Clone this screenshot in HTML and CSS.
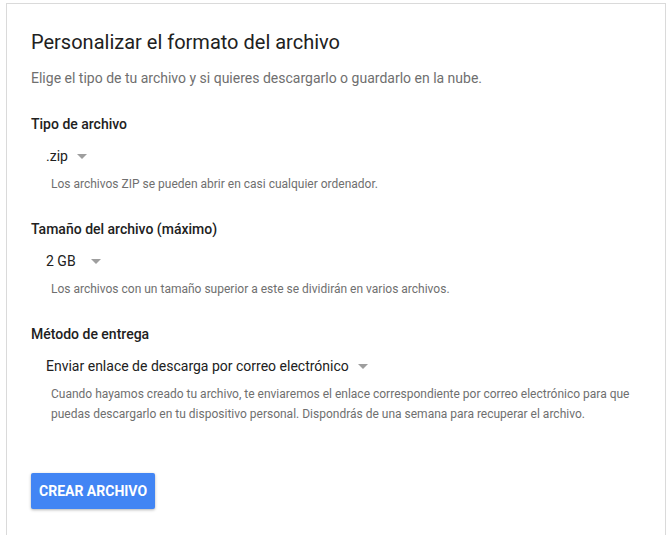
FILE: index.html
```html
<!DOCTYPE html>
<html lang="es">
<head>
<meta charset="utf-8">
<link rel="stylesheet" href="styles.css">
</head>
<body>
<div class="card">
  <h1 class="title">Personalizar el formato del archivo</h1>
  <p class="subtitle">Elige el tipo de tu archivo y si quieres descargarlo o guardarlo en la nube.</p>

  <section class="field">
    <h2 class="label">Tipo de archivo</h2>
    <div class="select"><span class="value">.zip</span><span class="arrow"></span></div>
    <p class="help">Los archivos ZIP se pueden abrir en casi cualquier ordenador.</p>
  </section>

  <section class="field">
    <h2 class="label">Tamaño del archivo (máximo)</h2>
    <div class="select"><span class="value wide">2 GB</span><span class="arrow"></span></div>
    <p class="help">Los archivos con un tamaño superior a este se dividirán en varios archivos.</p>
  </section>

  <section class="field">
    <h2 class="label">Método de entrega</h2>
    <div class="select"><span class="value">Enviar enlace de descarga por correo electrónico</span><span class="arrow"></span></div>
    <p class="help">Cuando hayamos creado tu archivo, te enviaremos el enlace correspondiente por correo electrónico para que puedas descargarlo en tu dispositivo personal. Dispondrás de una semana para recuperar el archivo.</p>
  </section>

  <button class="btn">Crear archivo</button>
</div>
</body>
</html>
```

FILE: styles.css
```css
html, body {
  margin: 0;
  padding: 0;
  background: #ffffff;
}
body {
  font-family: Roboto, "Liberation Sans", Arial, sans-serif;
  color: #212121;
  padding: 3px 0 0 6px;
  width: 671px;
  height: 535px;
  overflow: hidden;
  box-sizing: border-box;
}
.card {
  width: 660px;
  height: 532px;
  box-sizing: border-box;
  border: 1px solid #dadada;
  border-bottom: none;
  padding: 26px 24px 0 24px;
}
.title {
  margin: 0;
  font-size: 20px;
  font-weight: 400;
  line-height: 24px;
  color: #212121;
}
.subtitle {
  margin: 14px 0 0 0;
  font-size: 14px;
  line-height: 20px;
  color: #6f6f6f;
}
.field {
  margin-top: 26px;
}
.field + .field {
  margin-top: 25px;
}
.label {
  margin: 0;
  font-size: 14px;
  font-weight: 500;
  line-height: 20px;
  color: #212121;
}
.select {
  display: flex;
  align-items: center;
  margin: 12px 0 0 15px;
  height: 20px;
  font-size: 14px;
  color: #212121;
}
.value.wide {
  min-width: 36px;
}
.arrow {
  width: 0;
  height: 0;
  margin-left: 9px;
  border-left: 5.5px solid transparent;
  border-right: 5.5px solid transparent;
  border-top: 5px solid #9e9e9e;
}
.help {
  margin: 8px 0 0 20px;
  font-size: 12px;
  line-height: 20px;
  color: #6f6f6f;
  max-width: 590px;
}
.btn {
  display: block;
  margin-top: 49px;
  height: 36px;
  padding: 0 8px;
  min-width: 123px;
  border: none;
  border-radius: 2px;
  background: #4285f4;
  color: #ffffff;
  font-family: Roboto, "Liberation Sans", Arial, sans-serif;
  font-size: 14px;
  font-weight: 700;
  text-transform: uppercase;
  box-shadow: 0 1px 3px rgba(0,0,0,0.3);
}
```
